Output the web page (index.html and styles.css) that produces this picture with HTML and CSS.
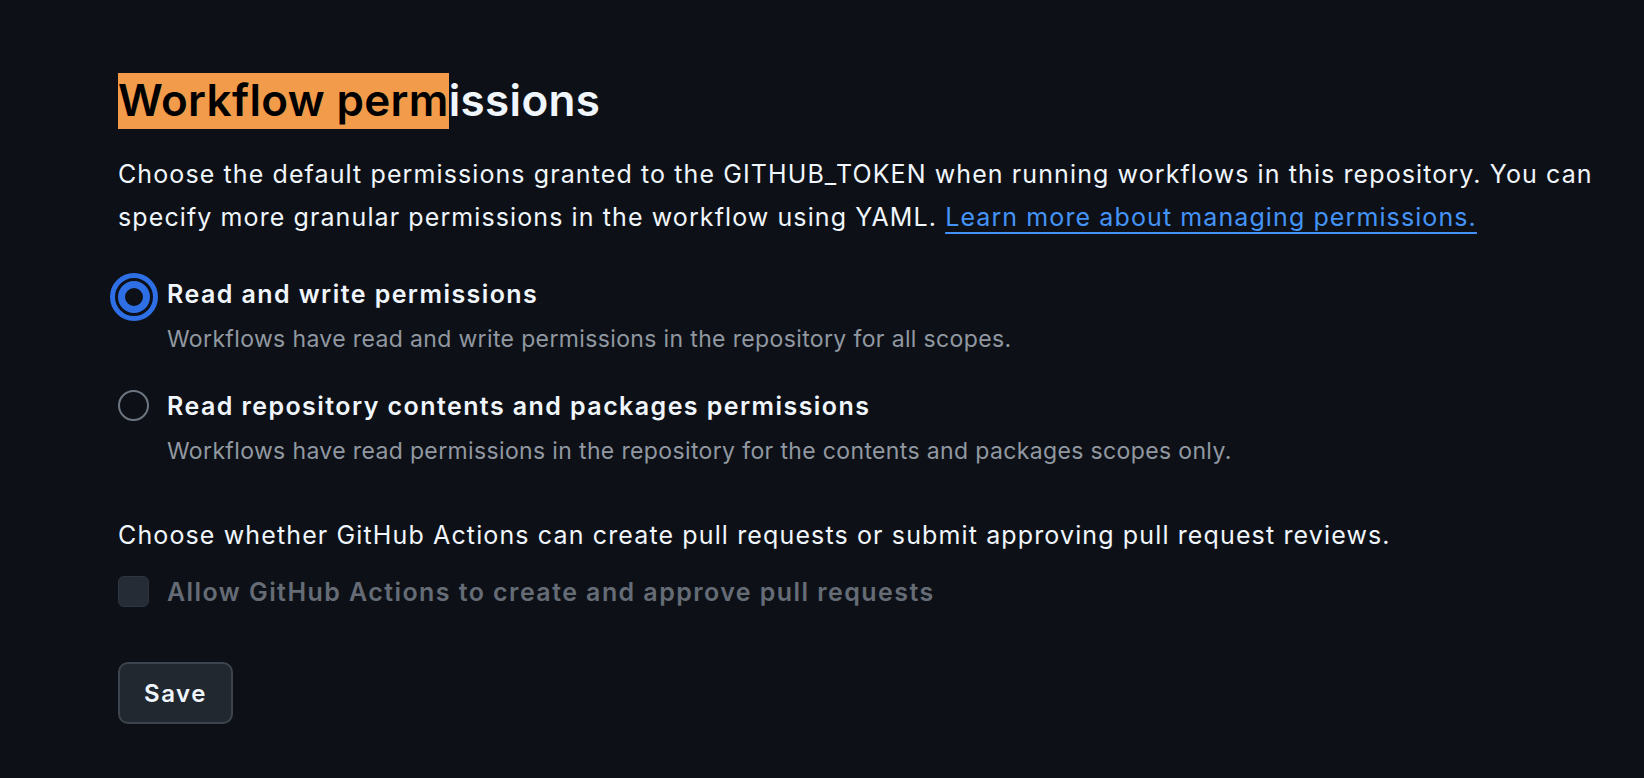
FILE: index.html
```html
<!DOCTYPE html>
<html lang="en">
<head>
<meta charset="utf-8">
<title>Workflow permissions</title>
<link rel="stylesheet" href="styles.css">
</head>
<body>
<main class="page">
  <h2 class="heading"><span class="hl">Workflow perm</span>issions</h2>
  <p class="intro">Choose the default permissions granted to the GITHUB_TOKEN when running workflows in this repository. You can specify more granular permissions in the workflow using YAML. <a class="link" href="#">Learn more about managing permissions.</a></p>

  <div class="option first">
    <div class="option-row">
      <span class="radio checked"></span>
      <span class="label">Read and write permissions</span>
    </div>
    <div class="note">Workflows have read and write permissions in the repository for all scopes.</div>
  </div>

  <div class="option second">
    <div class="option-row">
      <span class="radio"></span>
      <span class="label">Read repository contents and packages permissions</span>
    </div>
    <div class="note">Workflows have read permissions in the repository for the contents and packages scopes only.</div>
  </div>

  <p class="choose">Choose whether GitHub Actions can create pull requests or submit approving pull request reviews.</p>

  <div class="option-row check-row">
    <span class="checkbox"></span>
    <span class="label disabled">Allow GitHub Actions to create and approve pull requests</span>
  </div>

  <button class="btn" type="button">Save</button>
</main>
</body>
</html>
```

FILE: styles.css
```css
html, body {
  margin: 0;
  padding: 0;
  background: #0d1117;
}

body {
  font-family: Inter, "Noto Sans", "Liberation Sans", sans-serif;
  color: #f0f6fc;
  width: 1644px;
  height: 778px;
  overflow: hidden;
}

.page {
  padding: 72px 0 0 118px;
}

.heading {
  margin: 0;
  font-size: 44px;
  line-height: 56px;
  font-weight: 600;
  letter-spacing: 0.33px;
}

.hl {
  background: #f29c4b;
  color: #000;
  padding-bottom: 2px;
}

.intro {
  margin: 25px 0 0 0;
  width: 1510px;
  font-size: 25px;
  line-height: 43px;
  letter-spacing: 1.1px;
}

.link {
  color: #4493f8;
  text-decoration: underline;
  text-underline-offset: 6px;
  text-decoration-thickness: 1.5px;
  text-decoration-skip-ink: none;
}

.option.first {
  margin-top: 37px;
}

.option.second {
  margin-top: 32px;
}

.option-row {
  display: flex;
  align-items: center;
  gap: 18px;
}

.label {
  font-size: 25px;
  line-height: 37.5px;
  font-weight: 600;
  letter-spacing: 1.43px;
}

.label.disabled {
  color: #656c76;
}

.radio {
  box-sizing: border-box;
  width: 31px;
  height: 31px;
  border-radius: 50%;
  border: 2px solid #6e7681;
  flex: none;
}

.radio.checked {
  width: 32px;
  height: 32px;
  margin-left: -0.5px;
  margin-right: -0.5px;
  border: 7px solid #2f6fe6;
  outline: 5px solid #2f6fe6;
  outline-offset: 3px;
  margin-top: 5px;
}

.second .radio {
  margin-top: -3px;
}

.note {
  margin: 8px 0 0 49px;
  font-size: 23px;
  line-height: 34.5px;
  letter-spacing: 0.36px;
  color: #9198a1;
}

.choose {
  margin: 49px 0 0 0;
  font-size: 25px;
  line-height: 37.5px;
  letter-spacing: 1.13px;
}

.check-row {
  margin-top: 19px;
}

.checkbox {
  box-sizing: border-box;
  width: 31px;
  height: 31px;
  border-radius: 6px;
  background: #262c36;
  border: 1px solid #2f353e;
  flex: none;
  margin-top: -2px;
}

.btn {
  display: block;
  margin-top: 51px;
  box-sizing: border-box;
  width: 115px;
  height: 62px;
  border-radius: 10px;
  background: #212830;
  border: 2px solid #3d444d;
  color: #f0f6fc;
  font-family: Inter, "Noto Sans", "Liberation Sans", sans-serif;
  font-size: 24px;
  font-weight: 600;
  letter-spacing: 1.5px;
  padding: 0;
}
```
